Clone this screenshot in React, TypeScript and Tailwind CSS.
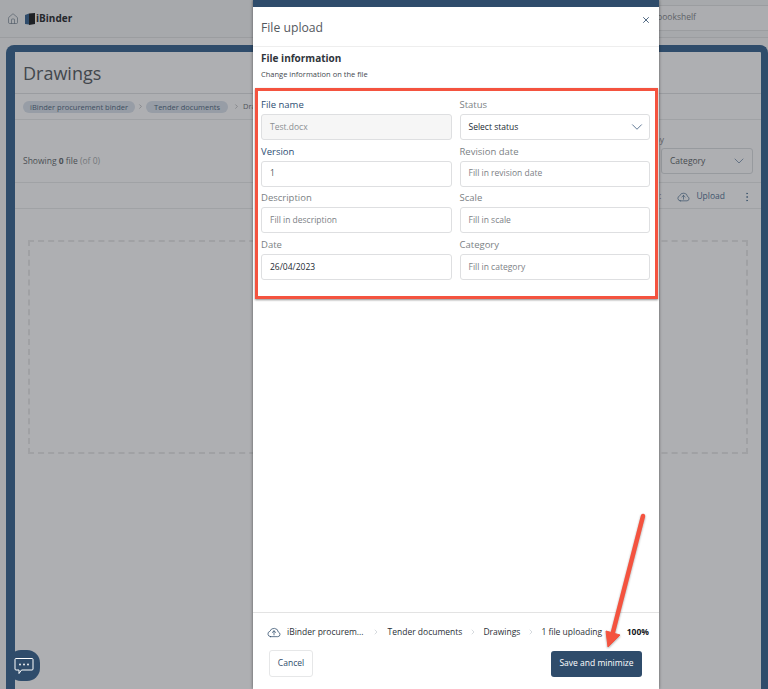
import React from "react";
import { ChevronDown, ChevronRight, EllipsisVertical, House, X } from "lucide-react";

const FONT = "font-['Open_Sans','Noto_Sans',sans-serif]";

const FIELDS = [
  { label: "File name", value: "Test.docx", active: true, disabled: true },
  { label: "Status", value: "Select status", select: true },
  { label: "Version", value: "1", active: true, filled: true },
  { label: "Revision date", value: "Fill in revision date" },
  { label: "Description", value: "Fill in description" },
  { label: "Scale", value: "Fill in scale" },
  { label: "Date", value: "26/04/2023", dark: true },
  { label: "Category", value: "Fill in category" },
];

function CloudIcon({ className }: { className: string }) {
  return (
    <svg viewBox="0 0 24 20" fill="none" stroke="currentColor" strokeWidth="1.3" strokeLinecap="round" strokeLinejoin="round" className={className}>
      <path d="M6 18 H18.5 A4 4 0 0 0 19.5 10.2 A7.5 7.5 0 0 0 5 8.8 A4.7 4.7 0 0 0 6 18 Z" />
      <path d="M12 15 V8 M9 10.8 L12 8 L15 10.8" />
    </svg>
  );
}

function Field({ f }: { f: (typeof FIELDS)[number] }) {
  return (
    <div className="flex flex-col">
      <label className={`text-[9.5px] leading-[17px] ${f.active ? "text-[#2d4e73]" : "text-[#7b7f84]"}`}>{f.label}</label>
      <div
        className={`mt-[1px] h-[26px] flex items-center justify-between pl-[8px] pr-[3px] border border-[#dedfe1] rounded-[3px] text-[8.5px] ${
          f.disabled ? "bg-[#f6f6f6] text-[#8b8e92]" : "bg-white"
        } ${f.select || f.dark ? "text-[#222a33]" : ""} ${f.filled ? "text-[#555a60]" : ""} ${
          !f.disabled && !f.select && !f.dark && !f.filled ? "text-[#7d8186]" : ""
        }`}
      >
        <span>{f.value}</span>
        {f.select && <ChevronDown className="w-[18px] h-[18px] text-[#2d4e73]" strokeWidth={1} />}
      </div>
    </div>
  );
}

function Background() {
  return (
    <div className="h-full flex flex-col bg-[#a9aaad] text-[#3d4146]">
      <header className="h-[38px] shrink-0 flex items-center justify-between border-b border-[#9b9da0] bg-[#a7a9ac]">
        <div className="flex items-center pl-[7px]">
          <House className="w-[12px] h-[12px] text-[#4f5a66]" strokeWidth={1.3} />
          <svg width="10" height="12" viewBox="0 0 10 12" className="ml-[6px]">
            <path d="M0 2 L4 0.5 V11.5 L0 11 Z" fill="#2f4c6b" />
            <path d="M4 0.5 L10 0 V11 L4 12 Z" fill="#1e2125" />
          </svg>
          <span className="ml-[1px] text-[10px] font-bold text-[#25282c]">iBinder</span>
        </div>
        <div className="w-[128px] h-[26px] -mt-[2px] pl-[17px] flex items-center border-y border-[#9b9da0] bg-[#acadb0] text-[8.5px] text-[#5e6267]">
          bookshelf
        </div>
      </header>
      <div className="flex-1 mt-[7px] ml-[6px] border-l-[9px] border-r-[7px] border-t-[7px] border-[#2f4c6b] rounded-t-[8px] flex flex-col bg-[#aeafb2]">
        <div className="h-[42px] border-b border-[#9a9ca0] pl-[8px] pt-[1px] flex items-center shrink-0">
          <h1 className="text-[18px] text-[#42474d]">Drawings</h1>
        </div>
        <div className="h-[26px] border-b border-[#a0a2a5] pl-[8px] flex items-center gap-[2px] text-[7.5px] shrink-0 whitespace-nowrap">
          <span className="px-[7px] h-[12px] leading-[12px] rounded-full bg-[#979da6] text-[#3e4f62]">iBinder procurement binder</span>
          <ChevronRight className="w-[7px] h-[7px]" strokeWidth={1.2} />
          <span className="px-[8px] h-[12px] leading-[12px] rounded-full bg-[#979da6] text-[#3e4f62]">Tender documents</span>
          <ChevronRight className="w-[7px] h-[7px] ml-[3px]" strokeWidth={1.2} />
          <span className="ml-[1px] text-[#50555b]">Dra</span>
        </div>
        <div className="h-[63px] border-b border-[#a0a2a5] pl-[8px] pr-[8px] pt-[20px] flex items-center justify-between shrink-0">
          <span className="text-[8.5px] text-[#4b4f55]">
            Showing <b>0</b> file <span className="text-[#74777b]">(of 0)</span>
          </span>
          <div className="relative w-[92px] h-[26px] border border-[#979a9e] rounded-[3px] flex items-center justify-between pl-[8px] pr-[5px] text-[8.5px] text-[#474b50]">
            <span className="absolute -top-[15px] -left-[40px] w-[42px] text-right text-[#5e6267]">Sort by</span>
            Category
            <ChevronDown className="w-[16px] h-[16px] text-[#3f556e]" strokeWidth={1} />
          </div>
        </div>
        <div className="h-[26px] border-b border-[#a0a2a5] pr-[8px] pt-[2px] flex items-center justify-end text-[8.5px] text-[#3f556e] shrink-0 whitespace-nowrap">
          <span className="mr-[16px] text-[#5e6267]">Date:</span>
          <CloudIcon className="w-[13px] h-[11px]" />
          <span className="ml-[6px]">Upload</span>
          <EllipsisVertical className="w-[12px] h-[12px] ml-[16px]" strokeWidth={1.5} />
        </div>
        <div className="flex-1 px-[13px] pt-[31px]">
          <div className="h-[214px] border-2 border-dashed border-[#a0a1a4]" />
        </div>
      </div>
    </div>
  );
}

export default function App() {
  return (
    <div className={`relative w-[768px] h-[689px] overflow-hidden ${FONT}`}>
      <Background />

      {/* chat bubble */}
      <div className="absolute left-[8px] top-[650px] w-[32px] h-[31px] rounded-[13px] bg-[#2f4c6b] flex items-center justify-center">
        <svg width="22" height="20" viewBox="0 0 22 20" fill="none" stroke="white" strokeWidth="1">
          <path d="M3 2.5 H19 A1 1 0 0 1 20 3.5 V13 A1 1 0 0 1 19 14 H8.5 L6 17.5 V14 H3 A1 1 0 0 1 2 13 V3.5 A1 1 0 0 1 3 2.5 Z" />
          <circle cx="7" cy="8.5" r="0.9" fill="white" stroke="none" />
          <circle cx="11" cy="8.5" r="0.9" fill="white" stroke="none" />
          <circle cx="15" cy="8.5" r="0.9" fill="white" stroke="none" />
        </svg>
      </div>

      {/* modal */}
      <div className="absolute left-[253px] top-0 w-[406px] h-full bg-white flex flex-col border-t-[7px] border-[#2f4c6b] shadow-[0_0_3px_rgba(0,0,0,0.5)]">
        <div className="h-[40px] shrink-0 border-b border-[#eeeeee] flex items-center justify-between pl-[8px] pr-[8px]">
          <h2 className="text-[12.2px] text-[#55595e] mt-[3px]">File upload</h2>
          <X className="w-[10px] h-[10px] -mt-[14px] text-[#2f4c6b]" strokeWidth={2} />
        </div>
        <div className="h-[41px] shrink-0 pl-[8px] pt-[4px]">
          <h3 className="text-[10px] leading-[14px] font-bold text-[#30353b]">File information</h3>
          <p className="text-[7.5px] leading-[12px] mt-[3px] text-[#44494f]">Change information on the file</p>
        </div>
        <section className="ml-[2px] mr-[1px] h-[211px] shrink-0 border-[3px] border-[#f4533f] pl-[3px] pr-[5px] pt-[5px] shadow-[0_1px_2px_rgba(0,0,0,0.45)]">
          <div className="grid grid-cols-2 gap-x-[8px] gap-y-[2.67px]">
            {FIELDS.map((f) => (
              <Field key={f.label} f={f} />
            ))}
          </div>
        </section>
        <div className="flex-1" />
        <div className="h-[77px] shrink-0 border-t border-[#e3e3e3] pl-[14px] pr-[10px] pt-[12px]">
          <div className="h-[14px] flex items-center text-[8.5px] text-[#2b3037] whitespace-nowrap">
            <CloudIcon className="w-[14px] h-[12px] text-[#2f4c6b]" />
            <span className="ml-[6px]">iBinder procurem...</span>
            <ChevronRight className="w-[8px] h-[8px] mx-[8px] text-[#9aa3ad]" strokeWidth={1.2} />
            <span>Tender documents</span>
            <ChevronRight className="w-[8px] h-[8px] mx-[6.5px] text-[#9aa3ad]" strokeWidth={1.2} />
            <span>Drawings</span>
            <ChevronRight className="w-[8px] h-[8px] mx-[6.5px] text-[#9aa3ad]" strokeWidth={1.2} />
            <span>1 file uploading</span>
            <span className="ml-auto font-bold text-[#15181c]">100%</span>
          </div>
          <div className="mt-[11px] flex items-center justify-between">
            <button className="ml-[2px] w-[44px] h-[27px] rounded-[3px] border border-[#e6e7e8] text-[8.5px] text-[#2f4c6b]">Cancel</button>
            <button className="mr-[7px] w-[91px] h-[26px] rounded-[3px] bg-[#2f4c6b] text-[8.5px] text-white">Save and minimize</button>
          </div>
        </div>
      </div>

      {/* red arrow */}
      <svg className="absolute left-[600px] top-[510px] drop-shadow-[0_1px_1px_rgba(0,0,0,0.35)]" width="50" height="140" viewBox="0 0 50 140" fill="none">
        <path d="M43 6 L12 126" stroke="#f4533f" strokeWidth="4.5" strokeLinecap="round" />
        <path d="M6 121 L20 125 L8 137 Z" fill="#f4533f" stroke="#f4533f" strokeLinejoin="round" />
      </svg>
    </div>
  );
}
